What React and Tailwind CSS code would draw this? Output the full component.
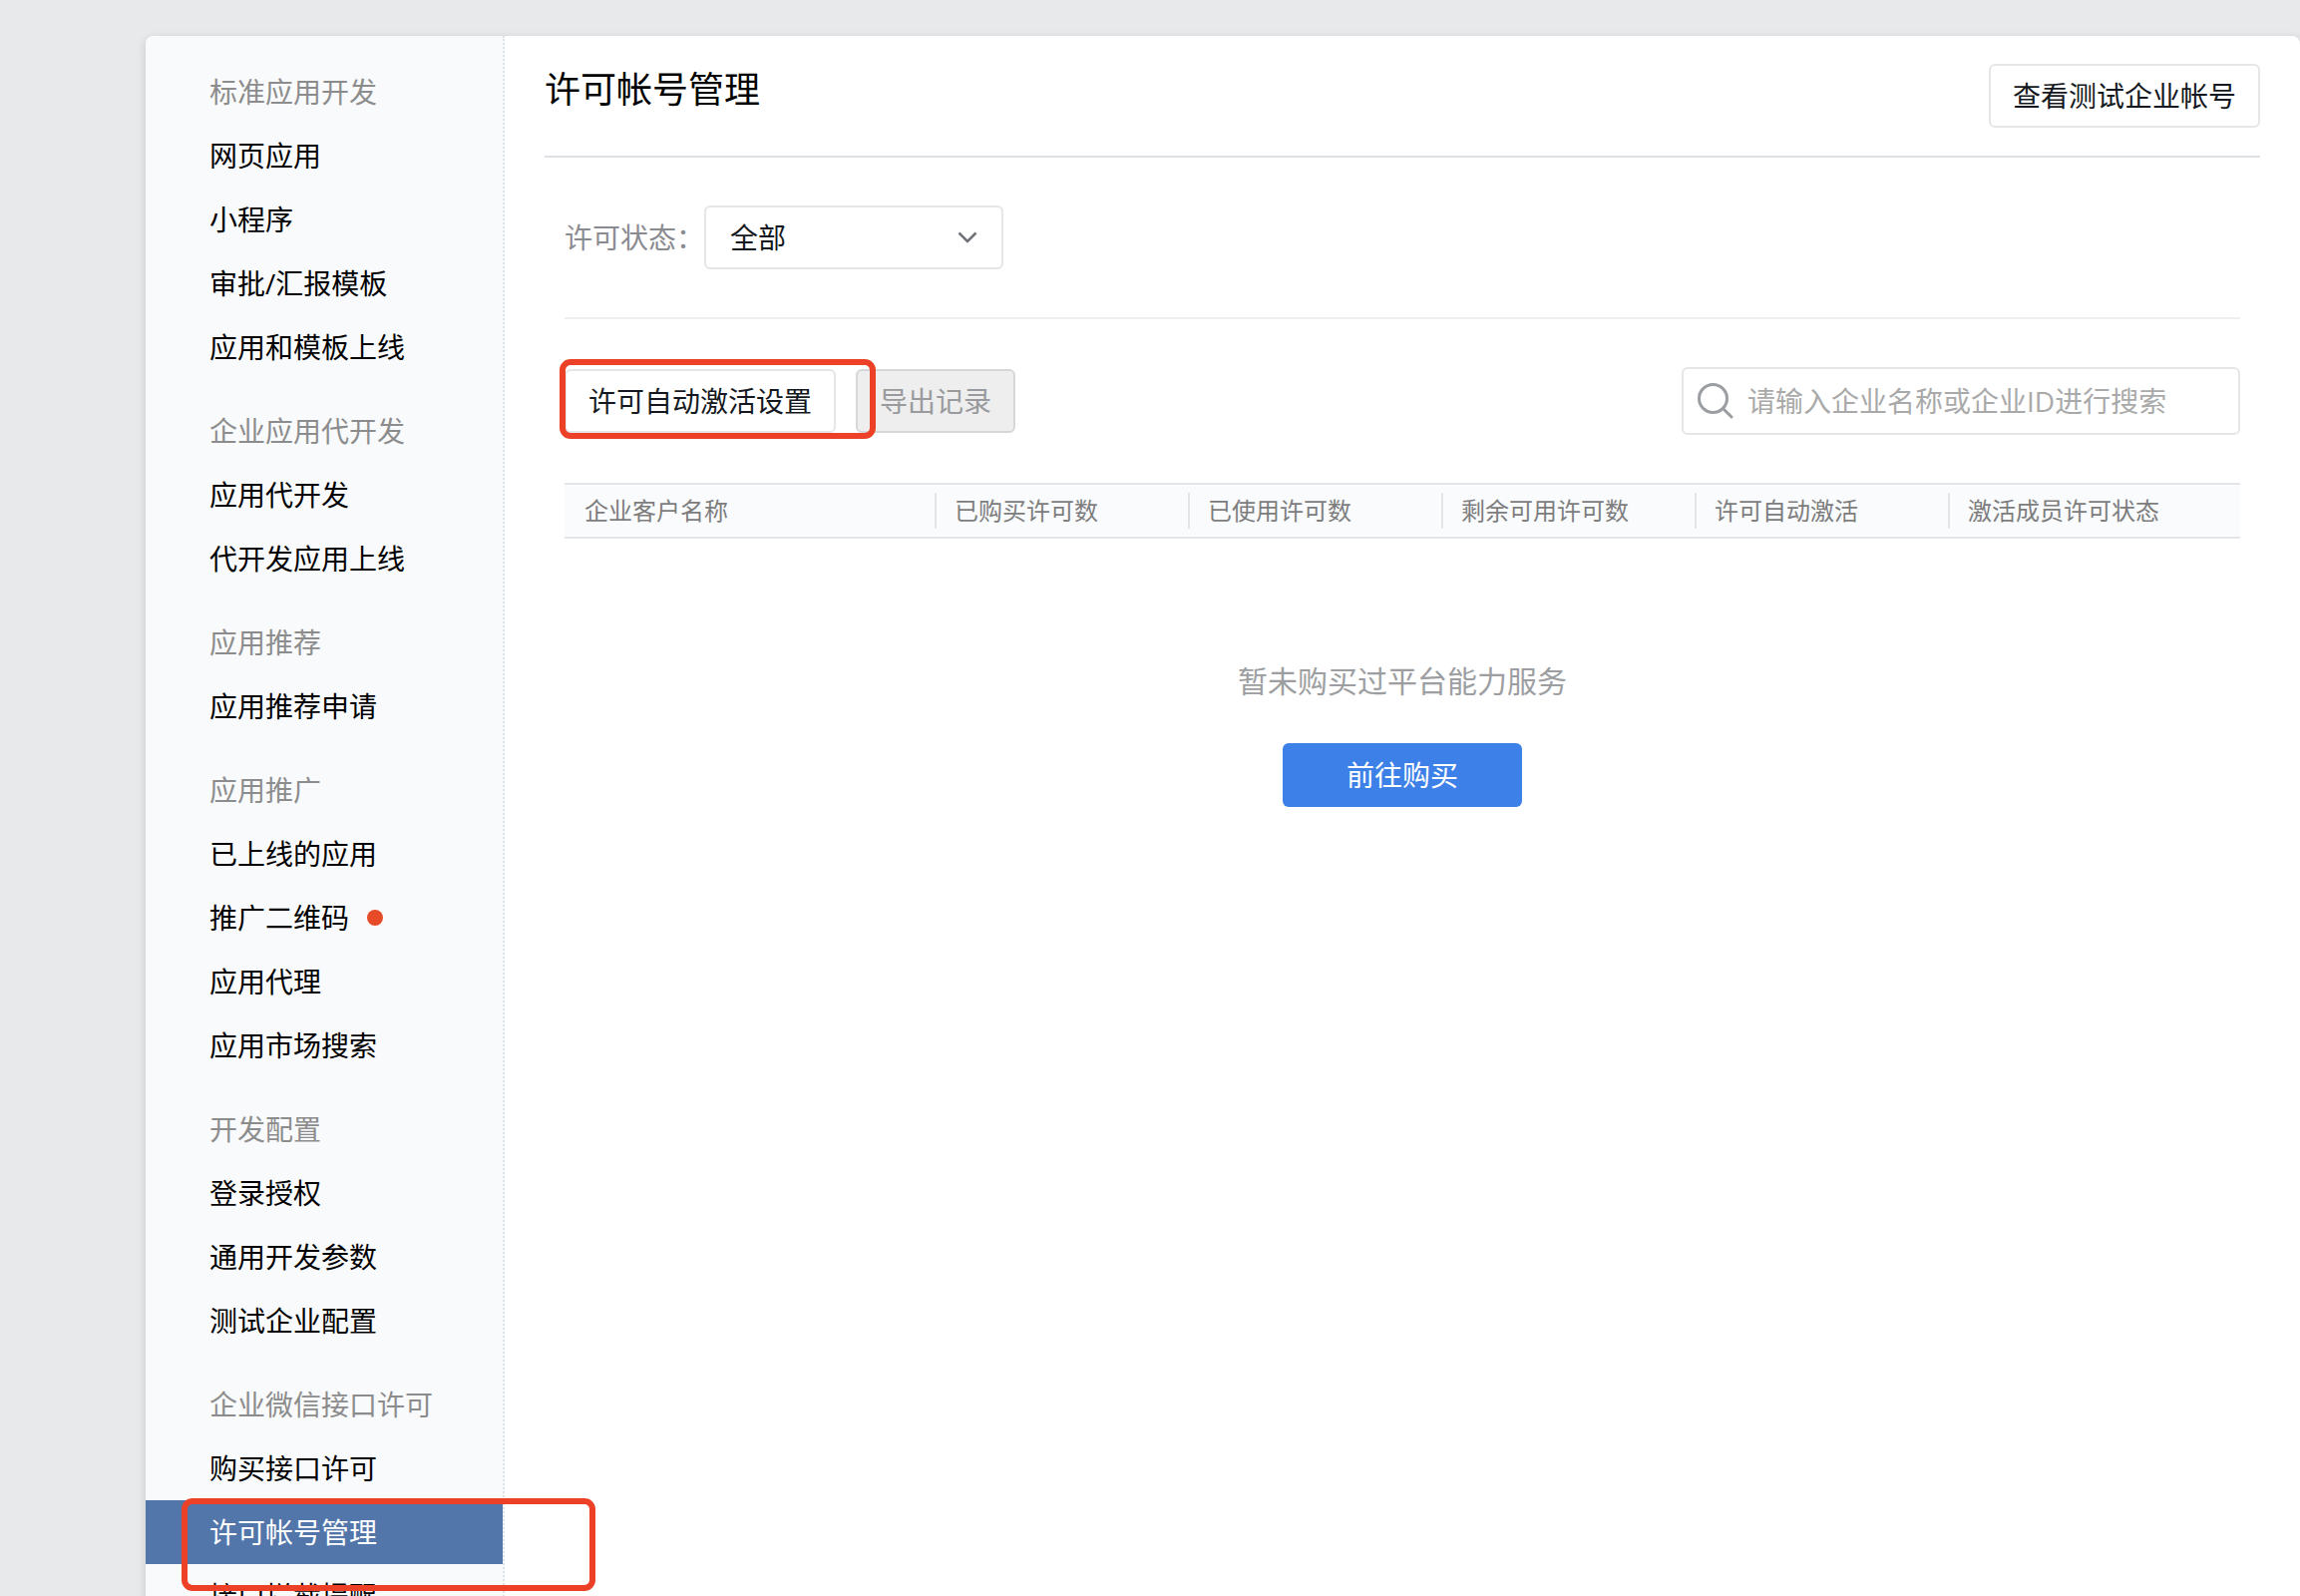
import { useState } from "react";

const groups = [
  { title: "标准应用开发", items: ["网页应用", "小程序", "审批/汇报模板", "应用和模板上线"] },
  { title: "企业应用代开发", items: ["应用代开发", "代开发应用上线"] },
  { title: "应用推荐", items: ["应用推荐申请"] },
  { title: "应用推广", items: ["已上线的应用", "推广二维码", "应用代理", "应用市场搜索"] },
  { title: "开发配置", items: ["登录授权", "通用开发参数", "测试企业配置"] },
  { title: "企业微信接口许可", items: ["购买接口许可", "许可帐号管理", "接口拦截提醒"] },
];

const columns = ["企业客户名称", "已购买许可数", "已使用许可数", "剩余可用许可数", "许可自动激活", "激活成员许可状态"];
const columnWidths = ["w-[371px]", "w-[254px]", "w-[254px]", "w-[254px]", "w-[254px]", ""];

const ACTIVE = "许可帐号管理";
const WITH_DOT = "推广二维码";

function Sidebar() {
  return (
    <nav className="flex w-[360px] shrink-0 flex-col gap-5 rounded-tl-lg border-r-2 border-dotted border-[#dce1e6] bg-[#f9fafc] pt-6">
      {groups.map((group) => (
        <section key={group.title}>
          <h2 className="flex h-16 items-center pl-16 text-[#8c8c8c]">{group.title}</h2>
          <ul>
            {group.items.map((item) => (
              <li key={item} className="relative">
                <a
                  href="#"
                  className={`flex h-16 items-center gap-[18px] pl-16 ${item === ACTIVE ? "bg-[#5276a9] text-white" : "text-black"}`}
                >
                  {item}
                  {item === WITH_DOT && <span className="size-4 rounded-full bg-[#e64a27]" />}
                </a>
                {item === ACTIVE && <Highlight className="-top-0.5 left-9 h-[93px] w-[415px]" />}
              </li>
            ))}
          </ul>
        </section>
      ))}
    </nav>
  );
}

function Highlight({ className }) {
  return <span className={`pointer-events-none absolute z-10 rounded-[11px] border-6 border-[#ec4127] ${className}`} />;
}

function SearchBox() {
  const [keyword, setKeyword] = useState("");

  return (
    <label className="flex h-[68px] w-[560px] items-center gap-[14px] rounded-md border-2 border-[#e5e6e7] pl-[14px]">
      <svg className="size-9 shrink-0" viewBox="0 0 36 36" fill="none" stroke="#9a9ea2" strokeWidth="3" strokeLinecap="round">
        <circle cx="15.5" cy="15.5" r="14" />
        <path d="M25.500 25.500L34 34" />
      </svg>
      <input
        type="text"
        aria-label="搜索企业"
        value={keyword}
        onChange={(e) => setKeyword(e.target.value)}
        placeholder="请输入企业名称或企业ID进行搜索"
        className="min-w-0 flex-1 outline-none placeholder:text-[#a9a9a9]"
      />
    </label>
  );
}

export default function App() {
  const [status, setStatus] = useState("all");

  return (
    <div className="h-screen overflow-hidden bg-[#e8e9eb] pt-9 pl-[146px] font-['Open_Sans','Noto_Sans_CJK_SC',sans-serif] text-[28px] leading-10 text-[#141820]">
      <div className="flex min-h-full rounded-lg bg-white shadow-[0_2px_8px_rgba(0,0,0,0.15)]">
        <Sidebar />
        <main className="min-w-0 flex-1 px-10">
          <header className="flex h-[122px] items-start justify-between border-b-2 border-[#dde1e5] pt-7">
            <h1 className="text-4xl leading-[52px] text-black">许可帐号管理</h1>
            <button type="button" className="h-16 rounded-md border-2 border-[#e5e6e7] px-[22px]">
              查看测试企业帐号
            </button>
          </header>

          <div className="px-5">
            <div className="flex items-center border-b-2 border-[#eeeeee] py-12">
              <label htmlFor="status" className="w-[140px] text-[#8a8b90]">许可状态：</label>
              <div className="relative">
                <select
                  id="status"
                  value={status}
                  onChange={(e) => setStatus(e.target.value)}
                  className="h-16 w-[300px] appearance-none rounded-md border-2 border-[#e5e6e7] bg-white pl-6"
                >
                  <option value="all">全部</option>
                </select>
                <svg className="pointer-events-none absolute top-[26px] right-[26px] h-3 w-5" viewBox="0 0 20 12" fill="none" stroke="#6f7276" strokeWidth="2.5">
                  <path d="M1.500 1.500L10 10l8.500-8.500" />
                </svg>
              </div>
            </div>

            <div className="flex items-center justify-between py-12">
              <div className="relative flex gap-5">
                <button type="button" className="h-16 rounded-md border-2 border-[#e5e6e7] px-[22px]">
                  许可自动激活设置
                </button>
                <button type="button" disabled className="h-16 rounded-md border-2 border-[#d6d7d8] bg-[#eeeeee] px-[22px] text-[#989a9d]">
                  导出记录
                </button>
                <Highlight className="-top-[10px] -left-[5px] h-20 w-[317px]" />
              </div>
              <SearchBox />
            </div>

            <table className="w-full table-fixed border-y-2 border-[#e3e5e9] bg-[#fafbfd] text-2xl text-[#7d7d7d]">
              <thead>
                <tr>
                  {columns.map((name, i) => (
                    <th key={name} scope="col" className={`p-0 py-2 text-left font-normal ${columnWidths[i]}`}>
                      <div className={`h-9 leading-9 ${i === 0 ? "pl-5" : "border-l-2 border-[#e3e5e9] pl-[18px]"}`}>{name}</div>
                    </th>
                  ))}
                </tr>
              </thead>
            </table>

            <div className="flex flex-col items-center gap-10 pt-[120px]">
              <p className="text-[30px] leading-[45px] text-[#9c9ea1]">暂未购买过平台能力服务</p>
              <button type="button" className="h-16 w-60 rounded-md bg-[#3c80e8] text-white">前往购买</button>
            </div>
          </div>
        </main>
      </div>
    </div>
  );
}
